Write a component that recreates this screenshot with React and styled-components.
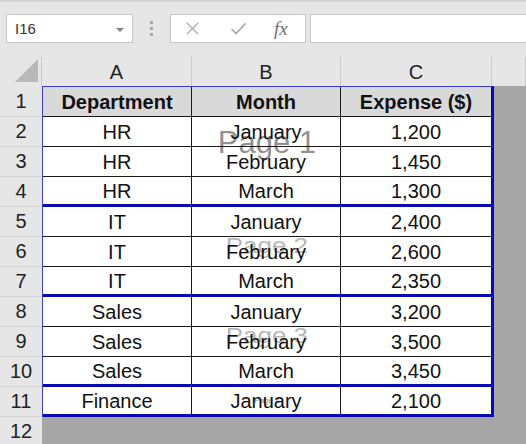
import React from 'react';
import styled, { createGlobalStyle } from 'styled-components';

const BLUE = '#0a0ab4';
const GRID = '#1a1a1a';
const HEADER_BG = '#e6e6e6';
const HEADER_LINE = '#cacaca';

const GlobalStyle = createGlobalStyle`
  html, body {
    margin: 0;
    padding: 0;
    background: #a6a6a6;
    overflow: hidden;
  }
  body {
    font-family: "Liberation Sans", Arial, sans-serif;
  }
`;

const pages = [
  {
    label: 'Page 1',
    size: 'big',
    rows: [
      ['Department', 'Month', 'Expense ($)'],
      ['HR', 'January', '1,200'],
      ['HR', 'February', '1,450'],
      ['HR', 'March', '1,300'],
    ],
  },
  {
    label: 'Page 2',
    size: 'mid',
    rows: [
      ['IT', 'January', '2,400'],
      ['IT', 'February', '2,600'],
      ['IT', 'March', '2,350'],
    ],
  },
  {
    label: 'Page 3',
    size: 'mid',
    rows: [
      ['Sales', 'January', '3,200'],
      ['Sales', 'February', '3,500'],
      ['Sales', 'March', '3,450'],
    ],
  },
  {
    label: 'Page 4',
    size: 'tiny',
    rows: [['Finance', 'January', '2,100']],
  },
];

const columns = [
  { name: 'A', width: 150 },
  { name: 'B', width: 149 },
  { name: 'C', width: 151 },
];

export default function App() {
  let rowNo = 0;

  return (
    <Window>
      <GlobalStyle />
      <Toolbar>
        <NameBox>
          <span>I16</span>
          <DropArrow />
        </NameBox>
        <Grip>
          <i />
          <i />
          <i />
        </Grip>
        <FormulaButtons>
          <CancelIcon viewBox="0 0 16 16">
            <path d="M2 2 L14 14 M14 2 L2 14" />
          </CancelIcon>
          <EnterIcon viewBox="0 0 18 14">
            <path d="M1.5 7.5 L6.5 12.5 L16.5 1.5" />
          </EnterIcon>
          <Fx>fx</Fx>
        </FormulaButtons>
        <FormulaInput />
      </Toolbar>

      <ColumnHeaders>
        <Corner>
          <svg width="23" height="23" viewBox="0 0 23 23">
            <polygon points="23,0 23,23 0,23" fill="#b9b9b9" />
          </svg>
        </Corner>
        {columns.map(col => (
          <ColumnHeader key={col.name} $width={col.width}>
            {col.name}
          </ColumnHeader>
        ))}
        <ColumnHeader $rest />
      </ColumnHeaders>

      <Body>
        <RowHeaders>
          {Array.from({ length: 12 }, (_, i) => (
            <RowHeader key={i}>{i + 1}</RowHeader>
          ))}
        </RowHeaders>
        <Canvas>
          <PrintArea>
            {pages.map(page => (
              <Page key={page.label}>
                <Watermark $size={page.size}>
                  <span>{page.label}</span>
                </Watermark>
                {page.rows.map((cells, i) => {
                  rowNo += 1;
                  const isHead = rowNo === 1;
                  return (
                    <Row key={i} $break={i === page.rows.length - 1}>
                      {cells.map((text, c) => (
                        <Cell key={c} $head={isHead} $lastCol={c === cells.length - 1}>
                          {text}
                        </Cell>
                      ))}
                    </Row>
                  );
                })}
              </Page>
            ))}
          </PrintArea>
        </Canvas>
      </Body>
    </Window>
  );
}

const Window = styled.div`
  width: 526px;
  height: 444px;
  display: flex;
  flex-direction: column;
  background: #a6a6a6;
  overflow: hidden;
`;

const Toolbar = styled.div`
  height: 57px;
  box-sizing: border-box;
  display: flex;
  align-items: flex-start;
  padding: 12px 0 0 6px;
  background: #e6e6e6;
  border-top: 2px solid #d3d3d3;
  box-shadow: inset 0 1px 0 #efefef;
`;

const NameBox = styled.div`
  width: 127px;
  height: 29px;
  box-sizing: border-box;
  display: flex;
  align-items: center;
  justify-content: space-between;
  padding: 0 8px 0 8px;
  background: #fff;
  border: 1px solid #c6c6c6;
  font-size: 15px;
  color: #333;
`;

const DropArrow = styled.span`
  width: 0;
  height: 0;
  border-left: 4px solid transparent;
  border-right: 4px solid transparent;
  border-top: 4px solid #808080;
  margin-top: 2px;
`;

const Grip = styled.div`
  width: 37px;
  height: 29px;
  display: flex;
  flex-direction: column;
  align-items: center;
  justify-content: center;
  gap: 3px;

  i {
    width: 3px;
    height: 3px;
    background: #a9a9a9;
  }
`;

const FormulaButtons = styled.div`
  width: 136px;
  height: 29px;
  box-sizing: border-box;
  display: flex;
  align-items: center;
  padding-left: 14px;
  background: #fff;
  border: 1px solid #c6c6c6;
`;

const CancelIcon = styled.svg`
  width: 15px;
  height: 15px;
  fill: none;
  stroke: #a8a8a8;
  stroke-width: 1.5;
`;

const EnterIcon = styled.svg`
  width: 17px;
  height: 13px;
  margin-left: 30px;
  fill: none;
  stroke: #a8a8a8;
  stroke-width: 1.7;
`;

const Fx = styled.span`
  margin-left: 27px;
  font-family: "Liberation Serif", "Times New Roman", serif;
  font-style: italic;
  font-size: 19px;
  color: #6e6e6e;
  line-height: 1;
`;

const FormulaInput = styled.div`
  flex: 1;
  height: 29px;
  margin-left: 4px;
  box-sizing: border-box;
  background: #fff;
  border: 1px solid #c6c6c6;
  border-right: none;
`;

const ColumnHeaders = styled.div`
  height: 29px;
  display: flex;
  background: ${HEADER_BG};
`;

const Corner = styled.div`
  width: 42px;
  flex: none;
  display: flex;
  align-items: flex-end;
  justify-content: flex-end;
  padding: 0 3px 4px 0;
  box-sizing: border-box;
  border-right: 1px solid ${HEADER_LINE};
`;

const ColumnHeader = styled.div`
  ${p => (p.$rest ? 'flex: 1;' : `width: ${p.$width}px; flex: none;`)}
  box-sizing: border-box;
  display: flex;
  align-items: center;
  justify-content: center;
  border-right: 1px solid ${HEADER_LINE};
  font-size: 20px;
  color: #222;
  padding-top: 1px;
`;

const Body = styled.div`
  flex: 1;
  display: flex;
  min-height: 0;
`;

const RowHeaders = styled.div`
  width: 42px;
  flex: none;
  display: flex;
  flex-direction: column;
  background: ${HEADER_BG};
`;

const RowHeader = styled.div`
  height: 30px;
  flex: none;
  box-sizing: border-box;
  display: flex;
  align-items: center;
  justify-content: center;
  border-bottom: 1px solid #d4d4d4;
  font-size: 20px;
  color: #222;

  &:first-child {
    height: 31px;
  }
`;

const Canvas = styled.div`
  flex: 1;
  background: #a6a6a6;
`;

const PrintArea = styled.div`
  width: 452px;
  box-sizing: border-box;
  border-left: 1px solid #3c3cd2;
  border-top: 1px solid #3c3cd2;
  border-right: 3px solid ${BLUE};
  background: #fff;
`;

const Page = styled.div`
  position: relative;
`;

const watermarkLook = {
  big: 'font-size: 31px; color: rgba(95, 95, 95, 0.7); margin-top: -10px;',
  mid: 'font-size: 22px; color: rgba(110, 110, 110, 0.5); margin-top: -12px; transform: scaleX(1.18);',
  tiny: 'font-size: 8px; color: rgba(90, 90, 90, 0.7); margin-top: -2px;',
};

const Watermark = styled.div`
  position: absolute;
  inset: 0;
  display: flex;
  align-items: center;
  justify-content: center;
  pointer-events: none;
  z-index: 0;

  span {
    line-height: 1;
    ${p => watermarkLook[p.$size]}
  }
`;

const Row = styled.div`
  position: relative;
  z-index: 1;
  height: 30px;
  box-sizing: border-box;
  display: grid;
  grid-template-columns: 149px 149px 150px;
  border-bottom: ${p => (p.$break ? `3px solid ${BLUE}` : `1px solid ${GRID}`)};
`;

const Cell = styled.div`
  display: flex;
  align-items: center;
  justify-content: center;
  box-sizing: border-box;
  border-right: ${p => (p.$lastCol ? 'none' : `1px solid ${GRID}`)};
  background: ${p => (p.$head ? '#d9d9d9' : 'transparent')};
  font-size: 20px;
  font-weight: ${p => (p.$head ? 700 : 400)};
  color: #111;
  padding-top: 1px;
`;
